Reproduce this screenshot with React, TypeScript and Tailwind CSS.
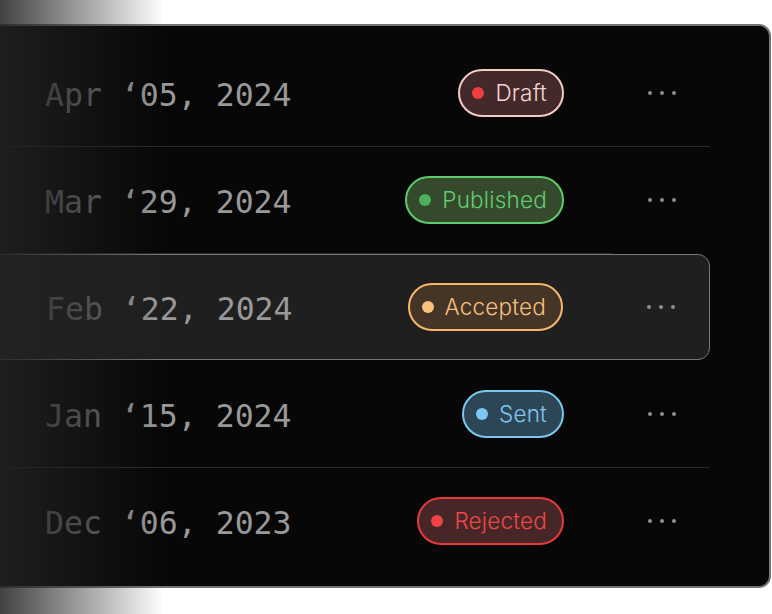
import type { ReactNode } from 'react';

// Các trạng thái của một bản ghi — mỗi trạng thái có bộ màu riêng cho pill
type Status = 'Draft' | 'Published' | 'Accepted' | 'Sent' | 'Rejected';

const STATUS_STYLES: Record<Status, { pill: string; dot: string }> = {
  Draft: {
    pill: 'border-[#f2cbc2] bg-[#44292a] text-[#f6d6ce]',
    dot: 'bg-[#ef3e3e]',
  },
  Published: {
    pill: 'border-[#5ccb6c] bg-[#354a2c] text-[#62cd70]',
    dot: 'bg-[#4cb05c]',
  },
  Accepted: {
    pill: 'border-[#f7b76b] bg-[#443526] text-[#f8bf7c]',
    dot: 'bg-[#fcc27c]',
  },
  Sent: {
    pill: 'border-[#7cc7ef] bg-[#2d4655] text-[#7ec9f0]',
    dot: 'bg-[#79c8f6]',
  },
  Rejected: {
    pill: 'border-[#e63a3b] bg-[#472627] text-[#ef4646]',
    dot: 'bg-[#f04343]',
  },
};

interface Row {
  month: string;
  rest: string;
  status: Status;
  active?: boolean;
  // kiểu đường phân cách bên dưới hàng
  divider: 'full' | 'short' | 'none';
}

const ROWS: Row[] = [
  { month: 'Apr', rest: ' ‘05, 2024', status: 'Draft', divider: 'full' },
  { month: 'Mar', rest: ' ‘29, 2024', status: 'Published', divider: 'short' },
  { month: 'Feb', rest: ' ‘22, 2024', status: 'Accepted', active: true, divider: 'none' },
  { month: 'Jan', rest: ' ‘15, 2024', status: 'Sent', divider: 'full' },
  { month: 'Dec', rest: ' ‘06, 2023', status: 'Rejected', divider: 'none' },
];

export default function App() {
  return (
    <div className="relative min-h-screen overflow-hidden bg-white pt-[24px] pr-px">
      {/* Card — cạnh trái tràn ra ngoài khung nhìn */}
      <div className="-ml-4 rounded-xl border-2 border-[#747474] bg-[#070707] pt-[14px] pb-[12px] pl-[22px] pr-[59px]">
        {ROWS.map((row, i) => (
          <div key={row.month}>
            <DateRow row={row} />
            {i < ROWS.length - 1 && <Divider kind={row.divider} />}
          </div>
        ))}
      </div>

      {/* Lớp phủ mờ dần phía bên trái */}
      <div className="pointer-events-none absolute inset-y-0 left-0 w-[164px] bg-gradient-to-r from-[rgba(34,34,34,0.86)] to-transparent" />
    </div>
  );
}

function Divider({ kind }: { kind: Row['divider'] }) {
  if (kind === 'none') return <div className="h-px" />;
  return <div className={kind === 'full' ? 'h-px bg-[#2a2a2a]' : 'h-px w-[604px] bg-[#2a2a2a]'} />;
}

function DateRow({ row }: { row: Row }) {
  const content: ReactNode = (
    <>
      <span className="mt-[6px] flex-1 whitespace-pre font-['DejaVu_Sans_Mono','Liberation_Mono',monospace] text-[31.5px] leading-none">
        <span className="text-[#6e6e6e]">{row.month}</span>
        <span className="text-[#999999]">{row.rest}</span>
      </span>
      <StatusPill status={row.status} />
      <MoreButton />
    </>
  );

  if (row.active) {
    return (
      <div className="-ml-[40px] flex h-[106px] items-center rounded-xl border-[1.5px] border-[#767676] bg-[#1f1f1f] pl-[77px]">
        {content}
      </div>
    );
  }

  return <div className="flex h-[106px] items-center pl-[37px]">{content}</div>;
}

function StatusPill({ status }: { status: Status }) {
  const s = STATUS_STYLES[status];
  return (
    <span
      className={`flex h-12 items-center gap-[11px] rounded-full border-2 pl-3 pr-[15px] font-['Inter','Noto_Sans',sans-serif] text-[22.5px] font-light leading-none tracking-[0.2px] ${s.pill}`}
    >
      <span className={`h-3 w-3 rounded-full ${s.dot}`} />
      {status}
    </span>
  );
}

function MoreButton() {
  return (
    <button type="button" className="ml-[50px] flex h-10 w-24 items-center justify-center gap-2">
      <span className="h-1 w-1 rounded-full bg-[#8e8e8e]" />
      <span className="h-1 w-1 rounded-full bg-[#8e8e8e]" />
      <span className="h-1 w-1 rounded-full bg-[#8e8e8e]" />
    </button>
  );
}
